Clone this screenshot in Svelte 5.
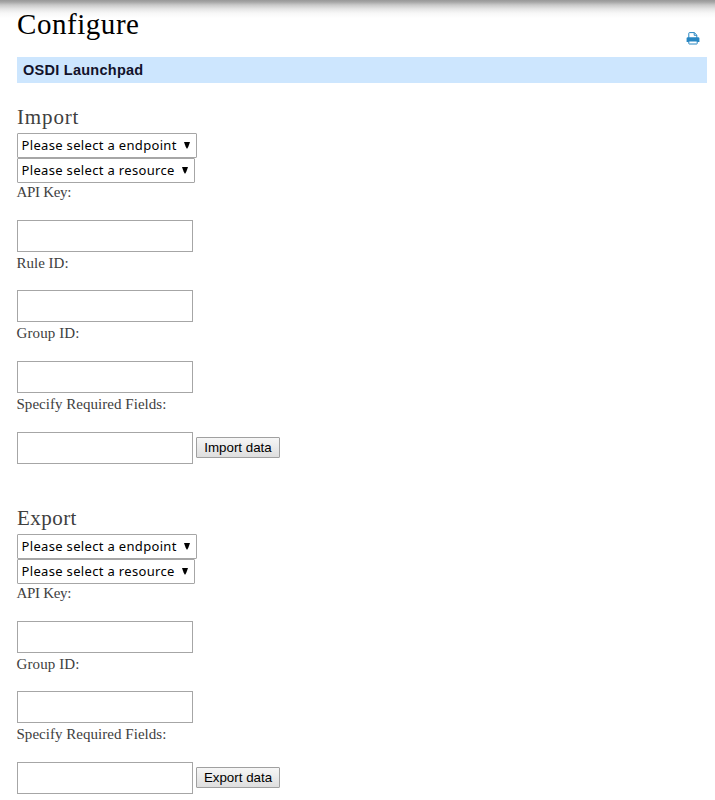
<script>
  const sections = [
    {
      title: 'Import',
      fields: ['API Key:', 'Rule ID:', 'Group ID:', 'Specify Required Fields:'],
      action: 'Import data'
    },
    {
      title: 'Export',
      fields: ['API Key:', 'Group ID:', 'Specify Required Fields:'],
      action: 'Export data'
    }
  ];
  const labelClass = { 'API Key:': 'api', 'Rule ID:': 'rule', 'Group ID:': 'group', 'Specify Required Fields:': 'specify' };
</script>

{#snippet arrow()}
  <svg width="6" height="7" viewBox="0 0 6 7"><path d="M0 0H6L4.4 4.5 3.4 6.5H2.6L1.6 4.5Z" /></svg>
{/snippet}

<main>
  <header>
    <h1>Configure</h1>
    <a class="print" href="#print" aria-label="Print">
      <svg width="14" height="13" viewBox="0 0 14 13">
        <path d="M2.8 6V1.3Q2.8.6 3.5.6H8.3L10.8 3V6M8.2.7V3.3H10.7" fill="#fff" stroke="#2786c2" />
        <path d="M1.8 5.2H12.2Q13.4 5.2 13.4 6.4V9.9H.6V6.4Q.6 5.2 1.8 5.2Z" fill="#2786c2" />
        <path d="M2.8 9H11.2V11.5Q11.2 12 10.7 12H3.3Q2.8 12 2.8 11.5Z" fill="#fff" stroke="#2786c2" />
      </svg>
    </a>
  </header>
  <h2>OSDI Launchpad</h2>
  {#each sections as section}
    <section>
      <h3 class={section.title.toLowerCase()}>{section.title}</h3>
      <button class="select endpoint"><span>Please select a endpoint</span>{@render arrow()}</button>
      <button class="select resource"><span>Please select a resource</span>{@render arrow()}</button>
      <div class="fields">
        {#each section.fields as field, i}
          <label>
            <span class="caption {labelClass[field]}">{field}</span>
            <span class="row">
              <input type="text" />
              {#if i === section.fields.length - 1}
                <button class="action" class:lowered={section.title === 'Import'}>{section.action}</button>
              {/if}
            </span>
          </label>
        {/each}
      </div>
    </section>
  {/each}
</main>

<style>
  :global(body) { background: #fff; }
  main {
    box-sizing: border-box;
    height: 800px;
    overflow: hidden;
    padding: 0 8px 0 17px;
    background: linear-gradient(#989898 0, #a6a6a6 2px, #c9c9c9 5px, #e6e6e6 9px, #f7f7f7 13px, #fff 18px) no-repeat 0 0 / 100% 18px;
    font-family: Georgia, "Liberation Serif", serif;
    color: #404040;
  }
  header { display: flex; justify-content: space-between; height: 57px; }
  h1 { margin: 7px 0 0; font-size: 29px; line-height: 34px; font-weight: 400; color: #000; letter-spacing: 0.55px; }
  .print { display: block; margin: 32px 7px 0 0; height: 13px; }
  .print svg { display: block; }
  h2 {
    margin: 0 0 21px;
    height: 26px;
    padding-left: 6px;
    background: #cde6fe;
    color: #12122a;
    font: 700 14.5px/26px "Liberation Sans", Arial, sans-serif;
    letter-spacing: 0.26px;
  }
  section { height: 401px; }
  h3 { margin: 0; height: 29px; font-size: 21px; line-height: 27px; font-weight: 400; }
  .import { letter-spacing: 0.85px; }
  .export { letter-spacing: 0.45px; }
  .select {
    display: flex;
    align-items: center;
    justify-content: space-between;
    box-sizing: border-box;
    height: 25px;
    padding: 0 6px 0 3.5px;
    border: 1px solid #a6a6a6;
    border-radius: 1px;
    background: #fff;
    color: #000;
    font: 13px/23px "Noto Sans", sans-serif;
    letter-spacing: 0.33px;
    white-space: nowrap;
  }
  .endpoint { width: 180px; }
  .resource { width: 178px; }
  .fields { margin-top: -1.85px; }
  label { display: block; height: 70.65px; }
  .caption { display: block; height: 38.65px; margin-left: -0.5px; font-size: 15px; line-height: 23px; white-space: nowrap; }
  .api { letter-spacing: -0.3px; }
  .rule { letter-spacing: 0; }
  .group { letter-spacing: 0.1px; }
  .specify { letter-spacing: 0.03px; }
  .row { display: flex; align-items: flex-start; gap: 3px; }
  input { box-sizing: border-box; width: 176px; height: 32px; margin: 0; border: 1px solid #a6a6a6; background: #fff; }
  .action {
    box-sizing: border-box;
    width: 84px;
    height: 21px;
    margin: 5px 0 0;
    padding: 0;
    border: 1px solid #a0a0a0;
    border-radius: 1px;
    background: linear-gradient(#f6f6f6, #dedede);
    color: #000;
    font: 13.33px/18px "Liberation Sans", Arial, sans-serif;
    white-space: nowrap;
  }
  .lowered { padding-top: 1px; }
</style>
